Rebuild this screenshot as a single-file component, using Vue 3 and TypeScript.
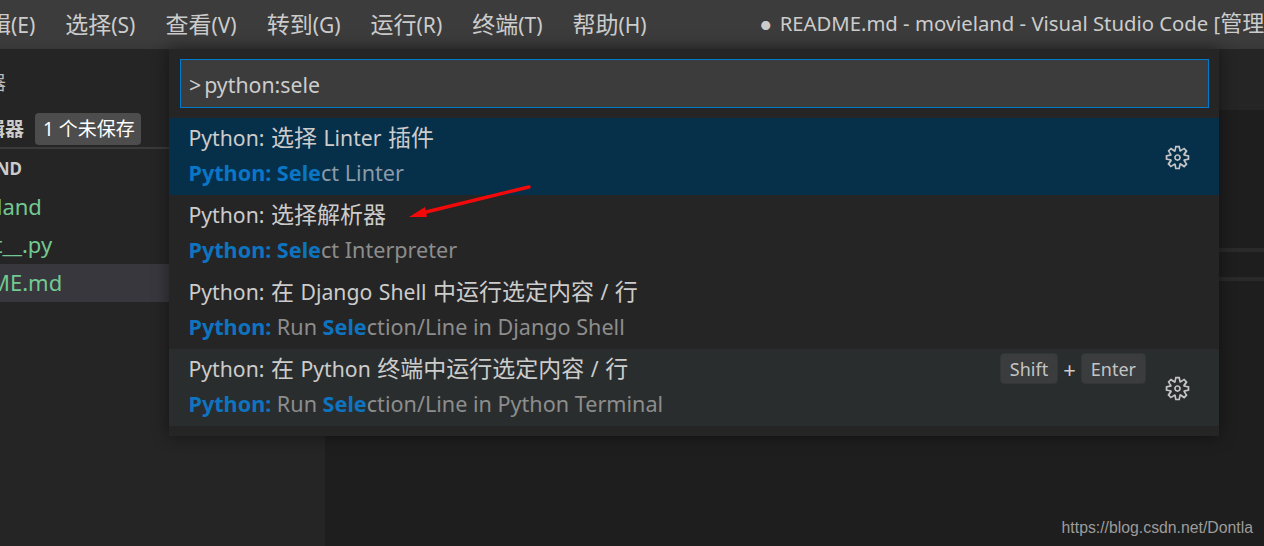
<script setup lang="ts">
const menus = ['选择(S)', '查看(V)', '转到(G)', '运行(R)', '终端(T)', '帮助(H)']

interface PaletteRow {
  title: string
  desc: [string, boolean][]
  keys?: string[]
  gear?: boolean
  state?: string
}

const rows: PaletteRow[] = [
  {
    title: 'Python: 选择 Linter 插件',
    desc: [['Python: Sele', true], ['ct Linter', false]],
    gear: true,
    state: 'selected',
  },
  {
    title: 'Python: 选择解析器',
    desc: [['Python: Sele', true], ['ct Interpreter', false]],
  },
  {
    title: 'Python: 在 Django Shell 中运行选定内容 / 行',
    desc: [['Python:', true], [' Run ', false], ['Sele', true], ['ction/Line in Django Shell', false]],
  },
  {
    title: 'Python: 在 Python 终端中运行选定内容 / 行',
    desc: [['Python:', true], [' Run ', false], ['Sele', true], ['ction/Line in Python Terminal', false]],
    keys: ['Shift', 'Enter'],
    gear: true,
    state: 'hover',
  },
]

// the Chinese glyphs sit bigger than the latin ones, so they get their own spans
function runs(text: string) {
  return text
    .split(/([\u3000-\u9fff]+)/)
    .filter(Boolean)
    .map((t) => ({ t, cjk: /[\u3000-\u9fff]/.test(t) }))
}

const gearPath =
  'M9.1 4.4L8.6 2H7.4l-.5 2.4-.7.3-2-1.3-.9.8 1.3 2-.2.7-2.4.5v1.2l2.4.5.3.8-1.3 2 .8.8 2-1.3.8.3.4 2.3h1.2l.5-2.4.8-.3 2 1.3.8-.8-1.3-2 .3-.8 2.3-.4V7.4l-2.4-.5-.3-.8 1.3-2-.8-.8-2 1.3-.7-.2zM9.4 1l.5 2.4L12 2.1l2 2-1.4 2.1 2.4.4v2.8l-2.4.5L14 12l-2 2-2.1-1.4-.5 2.4H6.6l-.5-2.4L4 13.9l-2-2 1.4-2.1L1 9.4V6.6l2.4-.5L2.1 4l2-2 2.1 1.4.4-2.4h2.8zm.6 7c0 1.1-.9 2-2 2s-2-.9-2-2 .9-2 2-2 2 .9 2 2zM8 9c.6 0 1-.4 1-1s-.4-1-1-1-1 .4-1 1 .4 1 1 1z'
</script>

<template>
  <div class="window">
    <header class="titlebar">
      <span class="menu clipped"><span class="cjk">编辑</span>(E)</span>
      <span v-for="m in menus" :key="m" class="menu">
        <span v-for="r in runs(m)" :key="r.t" :class="{ cjk: r.cjk }">{{ r.t }}</span>
      </span>
      <span class="title"><span class="dot">●</span>README.md - movieland - Visual Studio Code [<span class="cjk">管理员</span>]</span>
    </header>

    <div class="main">
      <aside class="sidebar">
        <div class="explorer">资源管理器</div>
        <div class="open-editors">
          <span class="open-label">打开的编辑器</span>
          <span class="badge">1 个未保存</span>
        </div>
        <div class="project">MOVIELAND</div>
        <div class="file"><span class="name-a">movieland</span></div>
        <div class="file"><span class="name-b">__init__.py</span></div>
        <div class="file active"><span class="name-c">README.md</span></div>
      </aside>
      <main class="editor">
        <div class="tabs"></div>
        <div class="guide first"></div>
        <div class="guide second"></div>
      </main>
    </div>

    <section class="palette">
      <div class="input-wrap">
        <div class="input"><span class="caret">&gt;</span>python:sele</div>
      </div>
      <div class="list">
        <div v-for="row in rows" :key="row.title" class="row" :class="row.state">
          <div class="texts">
            <div class="row-title">
              <span v-for="r in runs(row.title)" :key="r.t" :class="{ cjk: r.cjk }">{{ r.t }}</span>
            </div>
            <div class="row-desc">
              <template v-for="(part, i) in row.desc" :key="i">
                <b v-if="part[1]">{{ part[0] }}</b>
                <span v-else>{{ part[0] }}</span>
              </template>
            </div>
          </div>
          <div v-if="row.keys" class="keys">
            <kbd>{{ row.keys[0] }}</kbd>
            <span class="plus">+</span>
            <kbd>{{ row.keys[1] }}</kbd>
          </div>
          <svg v-if="row.gear" class="gear" viewBox="0 0 16 16" width="27" height="27">
            <path fill="#c5c5c5" fill-rule="evenodd" clip-rule="evenodd" :d="gearPath" />
          </svg>
        </div>
      </div>
    </section>

    <svg class="arrow" width="130" height="40" viewBox="0 0 130 40">
      <path d="M123 3 L16 29" stroke="#f20a0a" stroke-width="3.4" stroke-linecap="round" />
      <path d="M3 33 L19 23 L21 33 Z" fill="#f20a0a" />
    </svg>

    <div class="watermark">https://blog.csdn.net/Dontla</div>
  </div>
</template>

<style>
html,
body {
  margin: 0;
  background: #1e1e1e;
}
</style>

<style scoped>
.window {
  position: relative;
  width: 1264px;
  height: 546px;
  overflow: hidden;
  display: flex;
  flex-direction: column;
  font-family: "Noto Sans", "Noto Sans CJK SC", sans-serif;
  color: #cccccc;
  background: #1e1e1e;
}
.cjk {
  font-size: 23px;
}
.titlebar {
  height: 49px;
  line-height: 49px;
  flex: none;
  display: flex;
  align-items: center;
  background: linear-gradient(#3c3c3c 80%, #373737);
  font-size: 21px;
  white-space: nowrap;
  overflow: hidden;
}
.menu {
  margin-right: 30px;
  color: #cccccc;
}
.menu.clipped {
  margin-left: -35px;
}
.title {
  margin-left: 84px;
  font-size: 20.3px;
  color: #cccccc;
}
.title .cjk {
  font-size: 22px;
}
.dot {
  font-size: 10px;
  margin-right: 9px;
  vertical-align: 1px;
}
.main {
  flex: 1;
  display: flex;
  min-height: 0;
}
.sidebar {
  width: 325px;
  flex: none;
  background: #252526;
  overflow: hidden;
  white-space: nowrap;
  font-size: 19px;
}
.explorer {
  height: 60px;
  line-height: 68px;
  margin-left: -89px;
  color: #bbbbbb;
}
.open-editors {
  height: 34px;
  padding-top: 4px;
  display: flex;
  align-items: flex-start;
  border-bottom: 2px solid #3a3a3a;
  margin-left: -90px;
}
.open-label {
  font-weight: 700;
  line-height: 32px;
  color: #cccccc;
  font-size: 19px;
}
.badge {
  margin-left: 11px;
  height: 32px;
  line-height: 32px;
  padding: 0 6px 0 8px;
  background: #4d4d4d;
  border-radius: 4px;
  color: #ffffff;
  font-size: 19px;
}
.project {
  height: 39px;
  line-height: 40px;
  margin-left: -82px;
  font-weight: 700;
  font-size: 17px;
}
.file {
  height: 38px;
  line-height: 36px;
  font-size: 22px;
  color: #73c991;
}
.file.active {
  background: #37373d;
}
.name-a {
  margin-left: -66px;
}
.name-b {
  margin-left: -50px;
}
.name-c {
  margin-left: -66px;
}
.editor {
  flex: 1;
  background: #1e1e1e;
}
.tabs {
  height: 61px;
  background: #252526;
}
.guide {
  height: 4px;
  background: #2a2a2a;
}
.guide.first {
  margin-top: 138px;
}
.guide.second {
  margin-top: 25px;
}
.palette {
  position: absolute;
  left: 169px;
  top: 49px;
  width: 1050px;
  height: 387px;
  background: #252526;
  box-shadow: 0 0 16px rgba(0, 0, 0, 0.45);
}
.input-wrap {
  padding: 10px 10px 10px 11px;
}
.input {
  height: 47px;
  line-height: 49px;
  padding-left: 8px;
  border: 1px solid #007acc;
  background: #3c3c3c;
  font-size: 21.3px;
  color: #cccccc;
}
.caret {
  margin-right: 3px;
}
.row {
  height: 77px;
  display: flex;
  align-items: flex-start;
  padding-left: 19.5px;
  position: relative;
}
.row.selected {
  background: #062f4a;
}
.row.hover {
  background: #2a2d2e;
}
.texts {
  flex: 1;
  min-width: 0;
  white-space: nowrap;
}
.row-title {
  height: 40px;
  line-height: 38px;
  font-size: 21.2px;
  word-spacing: 1px;
  color: #cccccc;
}
.row-desc {
  height: 37px;
  line-height: 30px;
  font-size: 21.6px;
  color: #8d8d8d;
}
.row-desc b {
  font-weight: 700;
  color: #0e74c0;
}
.selected .row-desc span {
  color: #8a9ba8;
}
.selected .row-desc b {
  color: #0a76c6;
}
.keys {
  display: flex;
  align-items: center;
  margin: 4px 73px 0 0;
  font-size: 18px;
}
kbd {
  height: 31px;
  line-height: 30px;
  padding: 0 9px;
  box-sizing: border-box;
  font-family: inherit;
  font-size: 18px;
  color: #c4c4c4;
  background: #3a3c3d;
  border: 1px solid #333637;
  border-radius: 4px;
}
.plus {
  margin: 0 5px;
  font-size: 22px;
}
.gear {
  position: absolute;
  right: 28px;
  top: 26px;
}
.arrow {
  position: absolute;
  left: 406px;
  top: 184px;
}
.watermark {
  position: absolute;
  right: 11px;
  top: 519px;
  font-family: "Liberation Sans", sans-serif;
  font-size: 15.8px;
  color: #9c9c9c;
}
</style>
